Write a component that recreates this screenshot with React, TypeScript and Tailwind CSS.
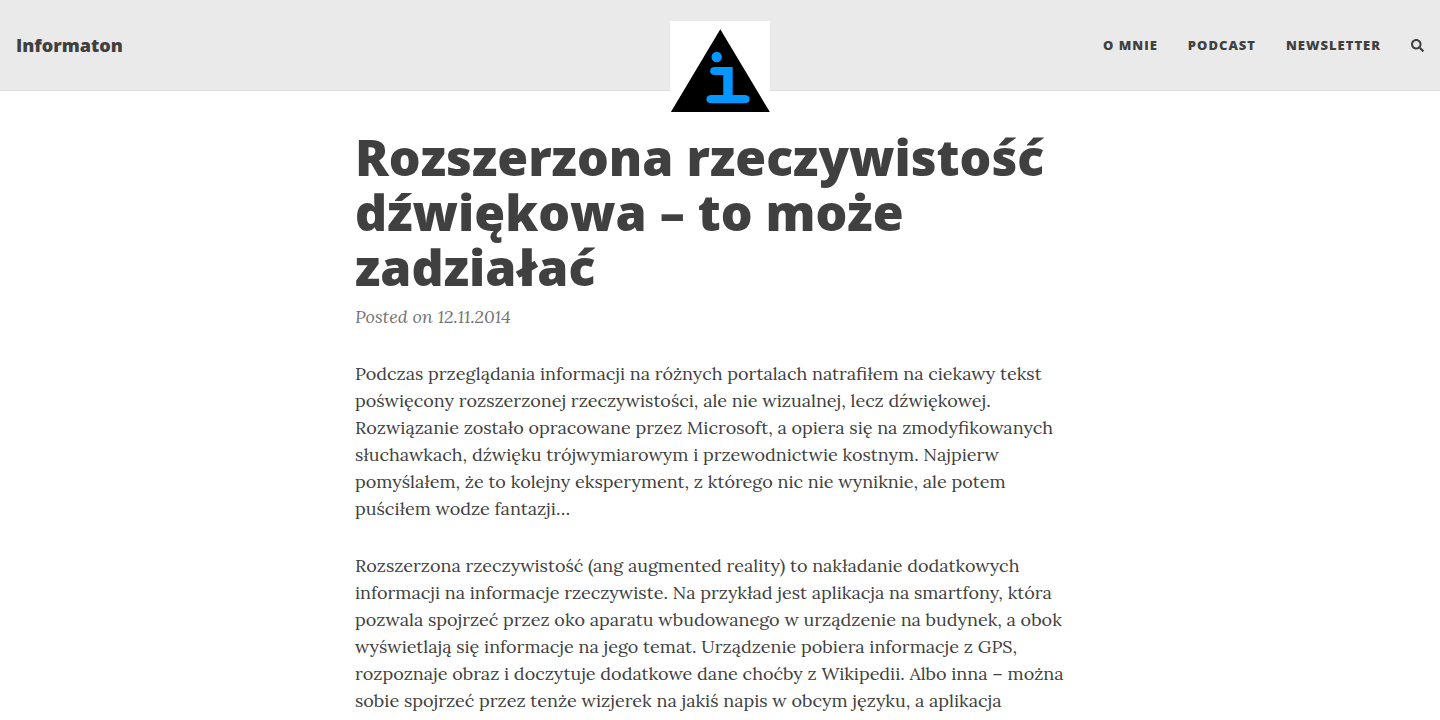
import React from "react";
import { FaSearch } from "react-icons/fa";

const navLinks = ["O mnie", "Podcast", "Newsletter"];

const paragraphs = [
  "Podczas przeglądania informacji na różnych portalach natrafiłem na ciekawy tekst poświęcony rozszerzonej rzeczywistości, ale nie wizualnej, lecz dźwiękowej. Rozwiązanie zostało opracowane przez Microsoft, a opiera się na zmodyfikowanych słuchawkach, dźwięku trójwymiarowym i przewodnictwie kostnym. Najpierw pomyślałem, że to kolejny eksperyment, z którego nic nie wyniknie, ale potem puściłem wodze fantazji…",
  "Rozszerzona rzeczywistość (ang augmented reality) to nakładanie dodatkowych informacji na informacje rzeczywiste. Na przykład jest aplikacja na smartfony, która pozwala spojrzeć przez oko aparatu wbudowanego w urządzenie na budynek, a obok wyświetlają się informacje na jego temat. Urządzenie pobiera informacje z GPS, rozpoznaje obraz i doczytuje dodatkowe dane choćby z Wikipedii. Albo inna – można sobie spojrzeć przez tenże wizjerek na jakiś napis w obcym języku, a aplikacja",
];

function Logo() {
  return (
    <svg viewBox="0 0 100 92" className="block w-full bg-white" aria-hidden="true">
      <path d="M50.3 8.2 99.8 91H.9Z" fill="#000" />
      <g fill="#0597ff">
        <circle cx="46.7" cy="36" r="5.2" />
        <path d="M45 46h17.7v28h11.6c3.6 0 5.4 1.5 5.4 4.15s-1.8 4.15-5.4 4.15H41.8c-3.6 0-5.4-1.5-5.4-4.15S38.2 74 41.8 74h11.5V54H45c-3.1 0-4.9-1.4-4.9-4s1.8-4 4.9-4Z" />
      </g>
    </svg>
  );
}

function Header() {
  return (
    <header className="relative flex h-[91px] items-center justify-between border-b border-[#dddddd] bg-[#eaeaea] px-4 font-['Open_Sans',sans-serif] font-extrabold text-[#404040]">
      <a href="#home" className="text-lg">
        Informaton
      </a>
      <a
        href="#home"
        aria-label="Strona główna"
        className="absolute top-[21px] left-1/2 w-[100px] -translate-x-1/2"
      >
        <Logo />
      </a>
      <nav className="flex items-center gap-[30px] text-[13px] leading-5 tracking-[1px] uppercase">
        {navLinks.map((label) => (
          <a key={label} href="#nav">
            {label}
          </a>
        ))}
        <button type="button" aria-label="Szukaj">
          <FaSearch />
        </button>
      </nav>
    </header>
  );
}

export default function App() {
  return (
    <div className="bg-white text-[#404040]">
      <Header />
      <main className="mx-auto max-w-[730px] pt-[39px] font-['Lora',serif] text-lg leading-[27px]">
        <h1 className="font-['Open_Sans',sans-serif] text-[50px] leading-[55px] font-extrabold">
          Rozszerzona rzeczywistość dźwiękowa – to może zadziałać
        </h1>
        <p className="mt-2 text-[#747474] italic">Posted on 12.11.2014</p>
        <article className="mt-[30px] flex flex-col gap-[30px]">
          {paragraphs.map((text) => (
            <p key={text}>{text}</p>
          ))}
        </article>
      </main>
    </div>
  );
}
